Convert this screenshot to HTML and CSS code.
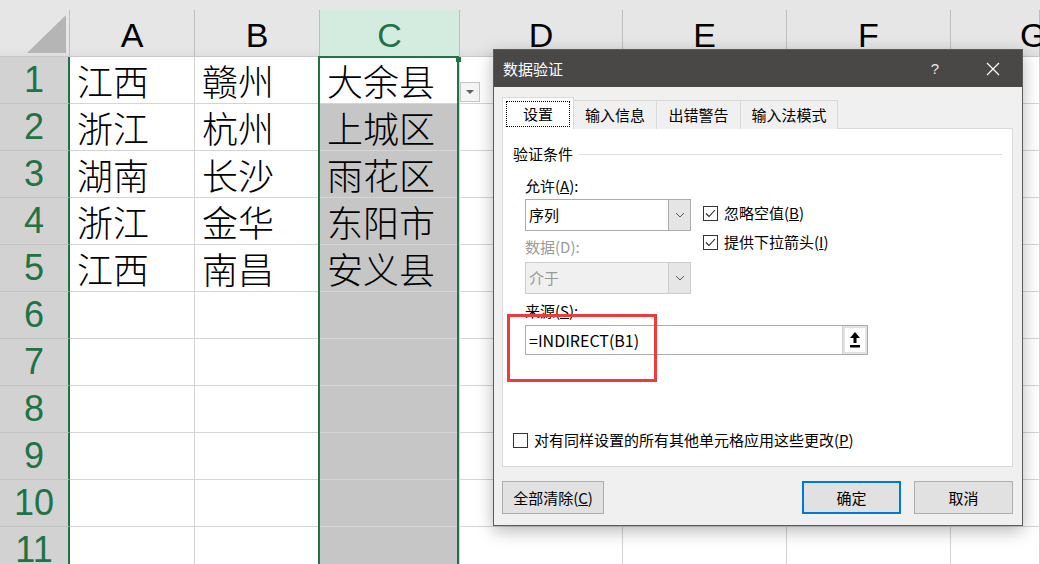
FILE: index.html
```html
<!DOCTYPE html>
<html lang="zh-CN">
<head>
    <meta charset="UTF-8"/>
    <title>数据验证</title>
    <link rel="stylesheet" href="styles.css">
</head>
<body>
    <div class="sheet">
        <div class="hrow">
            <div class="corner"><span class="tri"></span></div>
            <div class="colh wa">A</div>
            <div class="colh wb">B</div>
            <div class="colh wc on">C</div>
            <div class="colh wd">D</div>
            <div class="colh we">E</div>
            <div class="colh wf">F</div>
            <div class="colh wg">G</div>
        </div>
        <div class="row"><div class="rh">1</div><div class="cell wa">江西</div><div class="cell wb">赣州</div><div class="cell wc">大余县</div><div class="cell wd"></div><div class="cell we"></div><div class="cell wf"></div><div class="cell wg"></div></div>
        <div class="row"><div class="rh">2</div><div class="cell wa">浙江</div><div class="cell wb">杭州</div><div class="cell wc hl">上城区</div><div class="cell wd"></div><div class="cell we"></div><div class="cell wf"></div><div class="cell wg"></div></div>
        <div class="row"><div class="rh">3</div><div class="cell wa">湖南</div><div class="cell wb">长沙</div><div class="cell wc hl">雨花区</div><div class="cell wd"></div><div class="cell we"></div><div class="cell wf"></div><div class="cell wg"></div></div>
        <div class="row"><div class="rh">4</div><div class="cell wa">浙江</div><div class="cell wb">金华</div><div class="cell wc hl">东阳市</div><div class="cell wd"></div><div class="cell we"></div><div class="cell wf"></div><div class="cell wg"></div></div>
        <div class="row"><div class="rh">5</div><div class="cell wa">江西</div><div class="cell wb">南昌</div><div class="cell wc hl">安义县</div><div class="cell wd"></div><div class="cell we"></div><div class="cell wf"></div><div class="cell wg"></div></div>
        <div class="row"><div class="rh">6</div><div class="cell wa"></div><div class="cell wb"></div><div class="cell wc hl"></div><div class="cell wd"></div><div class="cell we"></div><div class="cell wf"></div><div class="cell wg"></div></div>
        <div class="row"><div class="rh">7</div><div class="cell wa"></div><div class="cell wb"></div><div class="cell wc hl"></div><div class="cell wd"></div><div class="cell we"></div><div class="cell wf"></div><div class="cell wg"></div></div>
        <div class="row"><div class="rh">8</div><div class="cell wa"></div><div class="cell wb"></div><div class="cell wc hl"></div><div class="cell wd"></div><div class="cell we"></div><div class="cell wf"></div><div class="cell wg"></div></div>
        <div class="row"><div class="rh">9</div><div class="cell wa"></div><div class="cell wb"></div><div class="cell wc hl"></div><div class="cell wd"></div><div class="cell we"></div><div class="cell wf"></div><div class="cell wg"></div></div>
        <div class="row"><div class="rh">10</div><div class="cell wa"></div><div class="cell wb"></div><div class="cell wc hl"></div><div class="cell wd"></div><div class="cell we"></div><div class="cell wf"></div><div class="cell wg"></div></div>
        <div class="row"><div class="rh">11</div><div class="cell wa"></div><div class="cell wb"></div><div class="cell wc hl"></div><div class="cell wd"></div><div class="cell we"></div><div class="cell wf"></div><div class="cell wg"></div></div>

        <!-- selection frame over column C and the in-cell list arrow -->
        <div class="selection"><span class="handle"></span></div>
        <div class="cell_dd"><span class="tri_down"></span></div>
    </div>

    <div class="dialog">
        <div class="titlebar">
            <span class="title">数据验证</span>
            <span class="help">?</span>
            <span class="close">
                <svg width="14" height="14" viewBox="0 0 14 14"><path d="M1 1 L13 13 M13 1 L1 13" stroke="#fff" stroke-width="1.2" fill="none"/></svg>
            </span>
        </div>
        <div class="dbody">
            <div class="tabs">
                <div class="tab active"><span class="focus">设置</span></div>
                <div class="tab">输入信息</div>
                <div class="tab">出错警告</div>
                <div class="tab">输入法模式</div>
            </div>
            <div class="panel">
                <div class="group"><span>验证条件</span><i class="rule"></i></div>
                <div class="criteria">
                    <div class="fields">
                        <div class="lbl">允许(<u>A</u>):</div>
                        <div class="select">
                            <span class="val">序列</span>
                            <span class="drop"><svg width="10" height="6" viewBox="0 0 10 6"><path d="M1 1 L5 5 L9 1" stroke="#555" stroke-width="1" fill="none"/></svg></span>
                        </div>
                        <div class="lbl dim">数据(D):</div>
                        <div class="select off">
                            <span class="val">介于</span>
                            <span class="drop"><svg width="10" height="6" viewBox="0 0 10 6"><path d="M1 1 L5 5 L9 1" stroke="#555" stroke-width="1" fill="none"/></svg></span>
                        </div>
                    </div>
                    <div class="checks">
                        <div class="check"><span class="box"><svg width="13" height="13" viewBox="0 0 13 13"><path d="M2 6.5 L5 9.5 L11 3" stroke="#222" stroke-width="1.1" fill="none"/></svg></span>忽略空值(<u>B</u>)</div>
                        <div class="check"><span class="box"><svg width="13" height="13" viewBox="0 0 13 13"><path d="M2 6.5 L5 9.5 L11 3" stroke="#222" stroke-width="1.1" fill="none"/></svg></span>提供下拉箭头(<u>I</u>)</div>
                    </div>
                </div>
                <div class="lbl src_lbl">来源(<u>S</u>):</div>
                <div class="source">
                    <span class="formula">=INDIRECT(B1)</span>
                    <span class="pick">
                        <svg width="12" height="18" viewBox="0 0 12 18"><path d="M6 1 L11 7 L1 7 Z" fill="#000"/><rect x="4.5" y="7" width="3" height="5" fill="#000"/><rect x="1" y="14" width="10" height="2.5" fill="#000"/></svg>
                    </span>
                </div>
                <div class="check apply"><span class="box"></span>对有同样设置的所有其他单元格应用这些更改(<u>P</u>)</div>
            </div>
            <div class="buttons">
                <div class="btn clear">全部清除(<u>C</u>)</div>
                <div class="grow"></div>
                <div class="btn ok">确定</div>
                <div class="btn">取消</div>
            </div>
        </div>
        <div class="mark"></div>
    </div>
</body>
</html>
```

FILE: styles.css
```css
body {
    margin: 0;
    width: 1040px;
    height: 564px;
    overflow: hidden;
    background: #fff;
    font-family: "Noto Sans CJK SC", sans-serif;
}

/* ---- sheet ---- */
.sheet {
    position: relative;
    width: 1040px;
    height: 564px;
    overflow: hidden;
}

.hrow {
    display: flex;
    height: 57px;
    box-sizing: border-box;
    padding-top: 10px;
    background: linear-gradient(#e6e6e6 85%, #dedede);
    border-bottom: 1px solid #c8c8c8;
}

.corner {
    width: 70px;
    flex: none;
    box-sizing: border-box;
    border-right: 1px solid #c0c0c0;
    display: flex;
    justify-content: flex-end;
    align-items: flex-end;
    padding: 0 3px 3px 0;
}
.tri {
    width: 39px;
    height: 38px;
    background: #b5b5b5;
    clip-path: polygon(100% 0, 100% 100%, 0 100%);
}

.colh {
    flex: none;
    box-sizing: border-box;
    border-right: 1px solid #bfbfbf;
    text-align: center;
    font-family: "Liberation Sans", Arial, sans-serif;
    font-size: 34px;
    line-height: 42px;
    padding-top: 4px;
    color: #000;
}
.colh.on {
    background: #d3ecdf;
    color: #217346;
}
.colh.wg {
    text-align: left;
    padding-left: 69px;
}

.wa { width: 125px; }
.wb { width: 125px; }
.wc { width: 140px; }
.wd { width: 163px; }
.we { width: 164px; }
.wf { width: 164px; }
.wg { width: 89px; }

.row {
    display: flex;
    height: 47px;
}
.rh {
    width: 70px;
    flex: none;
    box-sizing: border-box;
    border-right: 2px solid #217346;
    border-bottom: 1px solid #c2c2c2;
    background: #d2d2d2;
    color: #217346;
    font-family: "Liberation Sans", Arial, sans-serif;
    font-size: 36px;
    line-height: 46px;
    text-align: center;
}
.cell {
    flex: none;
    box-sizing: border-box;
    border-right: 1px solid #d4d4d4;
    border-bottom: 1px solid #d4d4d4;
    padding-left: 7px;
    font-size: 36px;
    font-weight: 300;
    line-height: 46px;
    white-space: nowrap;
    color: #000;
}
.cell.hl {
    background: #c6c6c6;
    border-bottom-color: #d6d6d6;
}

.selection {
    position: absolute;
    left: 318px;
    top: 56px;
    width: 141px;
    height: 520px;
    box-sizing: border-box;
    border: 2px solid #217346;
    pointer-events: none;
}
.handle {
    position: absolute;
    right: -4px;
    top: -1px;
    width: 5px;
    height: 5px;
    background: #217346;
}

.cell_dd {
    position: absolute;
    left: 460px;
    top: 82px;
    width: 20px;
    height: 20px;
    box-sizing: border-box;
    background: #f4f4f4;
    border: 1px solid #c6c6c6;
    display: flex;
    align-items: center;
    justify-content: center;
}
.tri_down {
    width: 0;
    height: 0;
    border-left: 4px solid transparent;
    border-right: 4px solid transparent;
    border-top: 4px solid #606060;
}

/* ---- dialog ---- */
.dialog {
    position: absolute;
    left: 493px;
    top: 49px;
    width: 530px;
    height: 477px;
    box-sizing: border-box;
    border: 1px solid #5c5c5c;
    background: #f0f0f0;
    box-shadow: 0 5px 16px rgba(0, 0, 0, 0.28);
    font-size: 15px;
    color: #000;
}

.titlebar {
    height: 37px;
    background: #4a4846;
    display: flex;
    align-items: center;
    padding-left: 9px;
    color: #fff;
}
.title {
    flex: 1;
}
.help {
    width: 30px;
    text-align: center;
    margin-right: 20px;
    font-family: "Liberation Sans", sans-serif;
    font-size: 15px;
    color: #e8e8e8;
}
.close {
    width: 46px;
    margin-right: 6px;
    display: flex;
    justify-content: center;
}

.dbody {
    padding: 10px 9px 11px 8px;
}

.tabs {
    display: flex;
    align-items: flex-end;
    height: 32px;
    margin-bottom: -1px;
}
.tab {
    box-sizing: border-box;
    height: 29px;
    line-height: 27px;
    text-align: center;
    border-top: 1px solid #d9d9d9;
    border-right: 1px solid #d9d9d9;
    background: #f0f0f0;
}
.tab:nth-child(2) { width: 83px; }
.tab:nth-child(3) { width: 84px; }
.tab:nth-child(4) { width: 97px; }
.tab.active {
    position: relative;
    z-index: 1;
    width: 72px;
    height: 32px;
    border-left: 1px solid #d9d9d9;
    background: #fff;
    padding: 3px 3px 2px 3px;
}
.focus {
    display: block;
    height: 100%;
    box-sizing: border-box;
    border: 1px dotted #000;
    line-height: 24px;
}

.panel {
    height: 339px;
    box-sizing: border-box;
    background: #fff;
    border: 1px solid #d9d9d9;
    padding: 15px 10px 16px 10px;
    display: flex;
    flex-direction: column;
}

.group {
    display: flex;
    align-items: center;
    gap: 6px;
    line-height: 20px;
}
.rule {
    flex: 1;
    height: 1px;
    background: #dcdcdc;
}

.lbl {
    line-height: 20px;
    margin-left: 12px;
}
.lbl.dim {
    color: #9a9a9a;
    margin-top: 6px;
}

.criteria {
    display: flex;
    margin-top: 12px;
}
.fields {
    width: 178px;
}

.select {
    margin: 3px 0 0 12px;
    height: 32px;
    box-sizing: border-box;
    border: 1px solid #acacac;
    background: #fff;
    display: flex;
}
.select .val {
    flex: 1;
    padding-left: 3px;
    line-height: 30px;
}
.drop {
    width: 21px;
    border-left: 1px solid #acacac;
    background: #e5e5e5;
    display: flex;
    align-items: center;
    justify-content: center;
}
.select.off {
    margin-top: 5px;
    border-color: #cccccc;
    background: #f0f0f0;
    color: #9a9a9a;
}
.select.off .drop {
    border-left-color: #cccccc;
    background: #e6e6e6;
}

.checks {
    margin-left: 12px;
    padding-top: 27px;
    display: flex;
    flex-direction: column;
    gap: 9px;
}
.check {
    display: flex;
    align-items: center;
    line-height: 20px;
}
.box {
    width: 15px;
    height: 15px;
    box-sizing: border-box;
    border: 1px solid #333;
    background: #fff;
    margin-right: 6px;
    display: flex;
    align-items: center;
    justify-content: center;
}

.src_lbl {
    margin-top: 7px;
}
.source {
    margin: 4px 0 0 12px;
    width: 343px;
    height: 30px;
    box-sizing: border-box;
    border: 1px solid #acacac;
    display: flex;
}
.formula {
    flex: 1;
    padding-left: 3px;
    line-height: 28px;
    font-size: 16px;
}
.pick {
    width: 25px;
    box-sizing: border-box;
    background: #fff;
    box-shadow: inset 0 0 0 2px #e1e1e1;
    border-left: 1px solid #d0d0d0;
    display: flex;
    align-items: center;
    justify-content: center;
}

.apply {
    margin-top: auto;
}

.buttons {
    display: flex;
    margin-top: 14px;
    gap: 13px;
}
.grow {
    flex: 1;
}
.btn {
    width: 99px;
    height: 33px;
    box-sizing: border-box;
    border: 1px solid #adadad;
    background: #e1e1e1;
    text-align: center;
    line-height: 31px;
}
.btn.clear {
    width: 102px;
}
.btn.ok {
    border: 2px solid #0078d7;
    line-height: 29px;
}

/* red annotation box */
.mark {
    position: absolute;
    left: 13px;
    top: 264px;
    width: 150px;
    height: 68px;
    box-sizing: border-box;
    border: 3px solid #ef3b3b;
}
```
